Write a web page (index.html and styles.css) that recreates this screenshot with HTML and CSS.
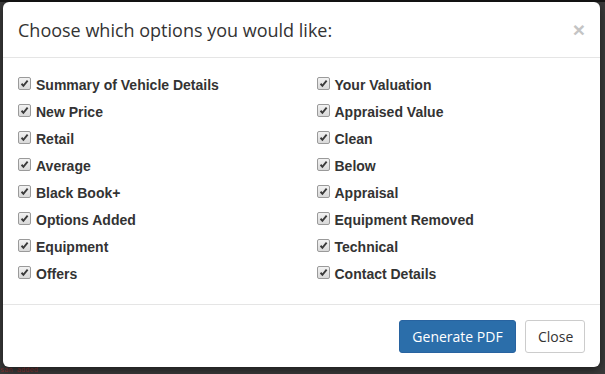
FILE: index.html
```html
<!DOCTYPE html>
<html>
<head>
<meta charset="utf-8">
<link rel="stylesheet" href="styles.css">
</head>
<body>
<div class="backdrop">
  <div class="modal">
    <div class="modal-header">
      <h4 class="modal-title">Choose which options you would like:</h4>
      <span class="close">×</span>
    </div>
    <div class="modal-body">
      <div class="col">
        <label class="opt"><span class="cb"><svg viewBox="0 0 13 13"><path d="M3 6.8 L5.2 9.2 L10.2 3.2" /></svg></span>Summary of Vehicle Details</label>
        <label class="opt"><span class="cb"><svg viewBox="0 0 13 13"><path d="M3 6.8 L5.2 9.2 L10.2 3.2" /></svg></span>New Price</label>
        <label class="opt"><span class="cb"><svg viewBox="0 0 13 13"><path d="M3 6.8 L5.2 9.2 L10.2 3.2" /></svg></span>Retail</label>
        <label class="opt"><span class="cb"><svg viewBox="0 0 13 13"><path d="M3 6.8 L5.2 9.2 L10.2 3.2" /></svg></span>Average</label>
        <label class="opt"><span class="cb"><svg viewBox="0 0 13 13"><path d="M3 6.8 L5.2 9.2 L10.2 3.2" /></svg></span>Black Book+</label>
        <label class="opt"><span class="cb"><svg viewBox="0 0 13 13"><path d="M3 6.8 L5.2 9.2 L10.2 3.2" /></svg></span>Options Added</label>
        <label class="opt"><span class="cb"><svg viewBox="0 0 13 13"><path d="M3 6.8 L5.2 9.2 L10.2 3.2" /></svg></span>Equipment</label>
        <label class="opt"><span class="cb"><svg viewBox="0 0 13 13"><path d="M3 6.8 L5.2 9.2 L10.2 3.2" /></svg></span>Offers</label>
      </div>
      <div class="col">
        <label class="opt"><span class="cb"><svg viewBox="0 0 13 13"><path d="M3 6.8 L5.2 9.2 L10.2 3.2" /></svg></span>Your Valuation</label>
        <label class="opt"><span class="cb"><svg viewBox="0 0 13 13"><path d="M3 6.8 L5.2 9.2 L10.2 3.2" /></svg></span>Appraised Value</label>
        <label class="opt"><span class="cb"><svg viewBox="0 0 13 13"><path d="M3 6.8 L5.2 9.2 L10.2 3.2" /></svg></span>Clean</label>
        <label class="opt"><span class="cb"><svg viewBox="0 0 13 13"><path d="M3 6.8 L5.2 9.2 L10.2 3.2" /></svg></span>Below</label>
        <label class="opt"><span class="cb"><svg viewBox="0 0 13 13"><path d="M3 6.8 L5.2 9.2 L10.2 3.2" /></svg></span>Appraisal</label>
        <label class="opt"><span class="cb"><svg viewBox="0 0 13 13"><path d="M3 6.8 L5.2 9.2 L10.2 3.2" /></svg></span>Equipment Removed</label>
        <label class="opt"><span class="cb"><svg viewBox="0 0 13 13"><path d="M3 6.8 L5.2 9.2 L10.2 3.2" /></svg></span>Technical</label>
        <label class="opt"><span class="cb"><svg viewBox="0 0 13 13"><path d="M3 6.8 L5.2 9.2 L10.2 3.2" /></svg></span>Contact Details</label>
      </div>
    </div>
    <div class="modal-footer">
      <button class="btn btn-primary">Generate PDF</button>
      <button class="btn btn-default">Close</button>
    </div>
  </div>
  <div class="under-text">san added</div>
</div>
</body>
</html>
```
FILE: styles.css
```css
* { box-sizing: border-box; }
html, body { margin: 0; padding: 0; }
body {
  width: 605px;
  height: 374px;
  overflow: hidden;
  background: #3c3c3c;
  font-family: "Open Sans", sans-serif;
}
.backdrop {
  position: relative;
  width: 605px;
  height: 374px;
  padding: 2px 5px 0 3px;
  background: linear-gradient(#151515 0, #151515 2px, #3a3a3a 2px);
}
.modal {
  width: 597px;
  background: #fff;
  border-radius: 6px;
  box-shadow: 0 3px 9px rgba(0,0,0,.5);
  position: relative;
  z-index: 1;
}
.modal-header {
  display: flex;
  align-items: center;
  justify-content: space-between;
  height: 56px;
  padding: 0 15px;
  border-bottom: 1px solid #e5e5e5;
}
.modal-title {
  margin: 0;
  font-weight: 400;
  font-size: 18px;
  color: #333;
  line-height: 26px;
  padding-top: 1px;
}
.close {
  font-family: "Liberation Sans", Arial, sans-serif;
  font-weight: 700;
  font-size: 21px;
  color: #c4c4c4;
  line-height: 1;
  margin-top: -1px;
}
.modal-body {
  display: grid;
  grid-template-columns: 1fr 1fr;
  padding: 13px 0 17px;
}
.col {
  display: flex;
  flex-direction: column;
  padding-left: 15px;
}
.opt {
  display: flex;
  align-items: center;
  height: 27px;
  font-family: "Liberation Sans", Arial, sans-serif;
  font-weight: 700;
  font-size: 14px;
  color: #333;
}
.cb {
  width: 13px;
  height: 13px;
  margin-right: 5px;
  margin-top: -3px;
  border: 1px solid #9a9a9a;
  border-radius: 2px;
  background: linear-gradient(#f2f2f2, #d9d9d9);
  display: flex;
}
.cb svg {
  width: 11px;
  height: 11px;
}
.cb path {
  fill: none;
  stroke: #3a3a3a;
  stroke-width: 2.2;
}
.modal-footer {
  display: flex;
  justify-content: flex-end;
  gap: 9px;
  padding: 15px 15px 14px;
  border-top: 1px solid #e5e5e5;
}
.btn {
  height: 33px;
  padding: 0 12px;
  font-family: "Open Sans", sans-serif;
  font-size: 14px;
  border-radius: 3px;
  border: 1px solid transparent;
}
.btn-primary {
  width: 117px;
  background: #2b6eaa;
  border-color: #2863a0;
  color: #fff;
}
.btn-default {
  width: 60px;
  background: #fff;
  border-color: #ccc;
  color: #333;
}
.under-text {
  position: absolute;
  left: 0;
  top: 367px;
  font-family: "DejaVu Sans Mono", monospace;
  font-size: 7px;
  line-height: 7px;
  color: #8a3030;
}
```
